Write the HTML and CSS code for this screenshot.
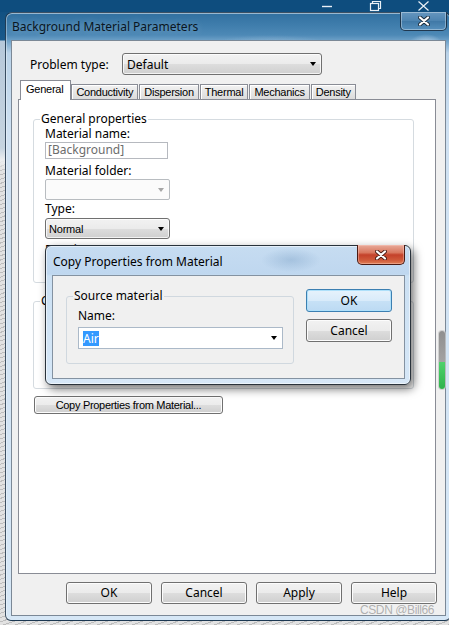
FILE: index.html
```html
<!DOCTYPE html>
<html>
<head>
<meta charset="utf-8">
<link rel="stylesheet" href="styles.css">
</head>
<body>
<div class="screen">
  <div class="behind-bar">
    <svg class="cap-glyphs" width="112" height="12" viewBox="0 0 112 12">
      <line x1="4" y1="6.5" x2="14" y2="6.5" stroke="#e9f0f6" stroke-width="1.4"/>
      <rect x="52.5" y="3.5" width="8" height="7" fill="none" stroke="#e9f0f6" stroke-width="1.2"/>
      <path d="M54.5 3.5 V1.5 H62.5 V8.5 H60.5" fill="none" stroke="#e9f0f6" stroke-width="1.2"/>
      <path d="M100.5 1.5 L110.5 10.5 M110.5 1.5 L100.5 10.5" stroke="#e9f0f6" stroke-width="1.2"/>
    </svg>
  </div>

  <div class="window">
    <div class="titlebar">
      <span class="title">Background Material Parameters</span>
      <div class="close-btn">
        <svg width="12" height="10" viewBox="0 0 12 10">
          <path d="M2 1.5 L10 8.5 M10 1.5 L2 8.5" stroke="#1d2c3a" stroke-width="4" stroke-linecap="round"/>
          <path d="M2 1.5 L10 8.5 M10 1.5 L2 8.5" stroke="#ffffff" stroke-width="2.2" stroke-linecap="round"/>
        </svg>
      </div>
    </div>

    <div class="client">
      <div class="ptype-row">
        <span class="ptype-label">Problem type:</span>
        <div class="combo combo-ptype"><span>Default</span><i class="arrow"></i></div>
      </div>

      <div class="tabs">
        <div class="tab tab-active">General</div>
        <div class="tab">Conductivity</div>
        <div class="tab">Dispersion</div>
        <div class="tab">Thermal</div>
        <div class="tab">Mechanics</div>
        <div class="tab">Density</div>
      </div>

      <div class="panel">
        <fieldset class="group group-general">
          <legend>General properties</legend>
          <div class="field-label">Material name:</div>
          <div class="textbox">[Background]</div>
          <div class="field-label label-gap">Material folder:</div>
          <div class="combo-disabled"><i class="arrow arrow-disabled"></i></div>
          <div class="field-label label-gap-sm">Type:</div>
          <div class="combo combo-type"><span class="narrow">Normal</span><i class="arrow"></i></div>
          <div class="field-label label-gap-md">Density:</div>
        </fieldset>
        <fieldset class="group group-second">
          <legend>Conductivity</legend>
        </fieldset>
        <button class="btn btn-copy">Copy Properties from Material...</button>
      </div>

      <div class="button-row">
        <button class="btn">OK</button>
        <button class="btn">Cancel</button>
        <button class="btn">Apply</button>
        <button class="btn">Help</button>
      </div>

      <div class="side-meter"></div>
    </div>
  </div>

  <div class="watermark">CSDN @Bill66</div>

  <div class="dialog">
    <div class="dlg-titlebar">
      <span class="dlg-title">Copy Properties from Material</span>
      <div class="dlg-close">
        <svg width="12" height="10" viewBox="0 0 12 10">
          <path d="M2 1.5 L10 8.5 M10 1.5 L2 8.5" stroke="#4a1d16" stroke-width="4" stroke-linecap="round"/>
          <path d="M2 1.5 L10 8.5 M10 1.5 L2 8.5" stroke="#ffffff" stroke-width="2.2" stroke-linecap="round"/>
        </svg>
      </div>
    </div>
    <div class="dlg-client">
      <fieldset class="group src-group">
        <legend>Source material</legend>
        <div class="field-label name-label">Name:</div>
        <div class="name-combo"><span class="sel">Air</span><i class="arrow"></i></div>
      </fieldset>
      <div class="dlg-buttons">
        <button class="btn dlg-btn dlg-btn-default">OK</button>
        <button class="btn dlg-btn">Cancel</button>
      </div>
    </div>
  </div>
</div>
</body>
</html>
```

FILE: styles.css
```css
* { box-sizing: border-box; }
html, body { margin: 0; padding: 0; }
body {
  width: 449px;
  height: 625px;
  overflow: hidden;
  background: #d6d6d6;
  font-family: "Noto Sans", "DejaVu Sans", sans-serif;
  font-size: 12px;
  color: #000;
}

.screen {
  position: relative;
  width: 449px;
  height: 625px;
  overflow: hidden;
  display: flex;
  flex-direction: column;
  background:
    linear-gradient(to bottom, #0f4d7d 0, #18598b 40px, #b6c8da 41px, #c6d4e0 148px, #eceef0 160px, rgba(236,238,240,0) 172px),
    repeating-linear-gradient(160deg, #bdbdbd 0 1px, #e2e2e2 1px 4px);
}

.behind-bar {
  flex: none;
  height: 12px;
  background: #0e4d7e;
  display: flex;
  justify-content: flex-end;
  padding-right: 19px;
}

/* main window */
.window {
  flex: none;
  margin-left: 5px;
  width: 446px;
  height: 609px;
  border: 1px solid rgba(22, 42, 62, 0.8);
  border-radius: 7px 7px 6px 6px;
  background:
    radial-gradient(ellipse 60px 10px at 265px 32px, rgba(170, 200, 225, 0.45), rgba(170,200,225,0) 100%),
    radial-gradient(ellipse 18px 12px at 420px 33px, rgba(220, 235, 250, 0.8), rgba(220,235,250,0) 100%),
    linear-gradient(to bottom, #3170a0 0, #3f7dac 12px, #4d89b6 22px, #6a9ec6 27px, #b9d2e8 40px, #cfe1f2 120px, #d6e7f6 100%);
  box-shadow: inset 0 1px 0 rgba(255, 255, 255, 0.5), inset 1px 0 0 rgba(255, 255, 255, 0.35);
  display: flex;
  flex-direction: column;
}

.titlebar {
  flex: none;
  height: 27px;
  display: flex;
  align-items: flex-start;
}
.title {
  align-self: center;
  padding-left: 6px;
  margin-top: -1px;
  color: #0a1622;
  text-shadow: 0 0 7px rgba(255, 255, 255, 0.35);
}
.close-btn {
  margin-left: auto;
  margin-right: 3px;
  margin-top: -1px;
  width: 47px;
  height: 19px;
  border: 1px solid rgba(20, 40, 60, 0.85);
  border-top: none;
  border-radius: 0 0 5px 5px;
  background: linear-gradient(to bottom, #6596bf 0, #4c83b0 50%, #3f78a6 51%, #5690bd 100%);
  box-shadow: inset 0 0 0 1px rgba(255, 255, 255, 0.35);
  display: flex;
  align-items: center;
  justify-content: center;
}

.client {
  flex: none;
  margin: 0 4px 0 5px;
  height: 576px;
  background: #f0f0f0;
  border: 1px solid #7b8896;
  position: relative;
  display: flex;
  flex-direction: column;
}

.ptype-row {
  display: flex;
  align-items: center;
  margin-top: 12px;
  padding-left: 18px;
  height: 22px;
}
.ptype-label { width: 92px; }

.combo {
  display: flex;
  align-items: center;
  border: 1px solid #707070;
  border-radius: 3px;
  background: linear-gradient(to bottom, #f2f2f2 0, #ebebeb 50%, #dddddd 51%, #cfcfcf 100%);
  box-shadow: inset 0 0 0 1px rgba(255, 255, 255, 0.75);
  padding-left: 4px;
}
.combo-ptype { width: 200px; height: 22px; }
.combo-type { width: 125px; height: 21px; margin-top: 3px; padding-left: 3px; }

.arrow {
  display: block;
  margin-left: auto;
  margin-right: 5px;
  width: 0;
  height: 0;
  border-left: 3.5px solid transparent;
  border-right: 3.5px solid transparent;
  border-top: 4px solid #000;
}
.arrow-disabled { border-top-color: #a6a6a6; }

.narrow {
  font-family: "Liberation Sans", Arial, sans-serif;
  font-size: 11px;
  letter-spacing: -0.2px;
}

/* tabs */
.tabs {
  position: relative;
  z-index: 1;
  display: flex;
  align-items: flex-end;
  height: 19px;
  margin: 5px 0 0 8px;
}
.tab {
  height: 15px;
  margin-left: 1px;
  padding: 0 4px;
  border: 1px solid #898c95;
  border-bottom: none;
  background: linear-gradient(to bottom, #f3f3f3 0, #e6e6e6 50%, #dcdcdc 100%);
  box-shadow: inset 1px 1px 0 #fff;
  font-family: "Liberation Sans", Arial, sans-serif;
  font-size: 11px;
  letter-spacing: -0.25px;
  line-height: 14px;
  white-space: nowrap;
}
.tab-active + .tab { margin-left: 0; }
.tab-active {
  height: 20px;
  margin-left: 0;
  margin-bottom: -1px;
  padding: 0 7px 0 5px;
  background: #fff;
  box-shadow: none;
  line-height: 16px;
}

.panel {
  flex: none;
  margin-left: 6px;
  width: 418px;
  height: 475px;
  background: #fff;
  border: 1px solid #898c95;
  display: flex;
  flex-direction: column;
  align-items: flex-start;
}

.group {
  margin: 0 0 0 14px;
  padding: 0 0 0 11px;
  min-width: 0;
  border: 1px solid #d5dbe0;
  border-radius: 3px;
}
.group legend {
  margin-left: -5px;
  padding: 0 1px;
  line-height: 14px;
}
.group-general { width: 381px; height: 171px; margin-top: 12px; padding-top: 1px; }
.group-second { width: 381px; height: 95px; margin-top: 11px; }

.field-label { line-height: 13px; }
.label-gap { margin-top: 5px; }
.label-gap-sm { margin-top: 2px; }
.label-gap-md { margin-top: 4px; }

.textbox {
  margin-top: 2px;
  width: 123px;
  height: 17px;
  border: 1px solid #b6b9bf;
  background: #fff;
  color: #6d6d6d;
  padding-left: 2px;
  line-height: 14px;
}
.combo-disabled {
  margin-top: 2px;
  width: 125px;
  height: 21px;
  border: 1px solid #b8bcc0;
  border-radius: 2px;
  background: #fbfbfb;
  display: flex;
  align-items: center;
}

.btn {
  width: 86px;
  height: 22px;
  padding: 0;
  border: 1px solid #707070;
  border-radius: 3px;
  background: linear-gradient(to bottom, #f2f2f2 0, #ebebeb 50%, #dddddd 51%, #cfcfcf 100%);
  box-shadow: inset 0 0 0 1px #fcfcfc;
  font-family: "Noto Sans", "DejaVu Sans", sans-serif;
  font-size: 12px;
  color: #000;
  line-height: 18px;
}
.btn-copy {
  margin: 7px 0 0 15px;
  width: 189px;
  height: 18px;
  font-family: "Liberation Sans", Arial, sans-serif;
  font-size: 11px;
  letter-spacing: -0.3px;
  line-height: 14px;
}

.button-row {
  display: flex;
  justify-content: flex-end;
  gap: 9px;
  margin: 8px 8px 0 0;
}

.side-meter {
  position: absolute;
  right: 0;
  top: 290px;
  width: 6px;
  height: 58px;
  border-radius: 3px;
  background: linear-gradient(to bottom, #8f8f8f 0, #a3a3a3 31px, #4fd26d 31px, #2fb24c 100%);
  box-shadow: 0 0 0 1px rgba(200, 200, 200, 0.8);
}

.watermark {
  position: absolute;
  left: 360px;
  top: 604px;
  font-family: "Liberation Sans", Arial, sans-serif;
  font-size: 12px;
  letter-spacing: -0.4px;
  line-height: 12px;
  color: rgba(120, 120, 120, 0.55);
}

/* dialog */
.dialog {
  position: absolute;
  z-index: 5;
  left: 45px;
  top: 245px;
  width: 366px;
  height: 140px;
  border: 1px solid #29323b;
  border-radius: 6px;
  background:
    radial-gradient(ellipse 30px 12px at 245px 14px, rgba(110, 150, 190, 0.35), rgba(110,150,190,0) 100%),
    linear-gradient(to bottom, #c6dcf1 0, #bfd7ef 28px, #cbe0f3 30px, #d6e7f7 100%);
  box-shadow: 3px 4px 10px rgba(0, 0, 0, 0.55), inset 0 0 0 1px rgba(255, 255, 255, 0.55);
  display: flex;
  flex-direction: column;
}
.dlg-titlebar {
  flex: none;
  height: 29px;
  display: flex;
  align-items: flex-start;
}
.dlg-title {
  align-self: center;
  padding-left: 7px;
  margin-top: 1px;
  color: #000;
}
.dlg-close {
  margin-left: auto;
  margin-right: 5px;
  margin-top: -1px;
  width: 48px;
  height: 20px;
  border: 1px solid #4a1a12;
  border-top: none;
  border-radius: 0 0 5px 5px;
  background: linear-gradient(to bottom, #e8aa9a 0, #d9785f 40%, #c4412a 52%, #cf5a3a 80%, #e07f55 100%);
  box-shadow: inset 0 0 0 1px rgba(255, 210, 200, 0.4);
  display: flex;
  align-items: center;
  justify-content: center;
}
.dlg-client {
  flex: none;
  margin: 0 5px 0 6px;
  height: 104px;
  border: 1px solid #8492a1;
  background: #f0f0f0;
  display: flex;
  align-items: flex-start;
}
.src-group {
  margin: 13px 0 0 13px;
  width: 228px;
  height: 75px;
  border-color: #d0d8df;
}
.name-label { margin-top: 6px; }
.name-combo {
  margin-top: 5px;
  width: 205px;
  height: 22px;
  border: 1px solid #abb9c8;
  background: #fff;
  display: flex;
  align-items: center;
  padding-left: 4px;
}
.sel {
  background: #3399ff;
  color: #fff;
  line-height: 15px;
}
.dlg-buttons {
  display: flex;
  flex-direction: column;
  gap: 7px;
  margin: 13px 0 0 12px;
}
.dlg-btn { height: 23px; }
.dlg-btn-default {
  border-color: #3c7fb1;
  background: linear-gradient(to bottom, #e6f2fc 0, #d9ebfa 50%, #c7e1f6 51%, #bcdaf3 100%);
  box-shadow: inset 0 0 0 1px #aee0fa;
}
```
